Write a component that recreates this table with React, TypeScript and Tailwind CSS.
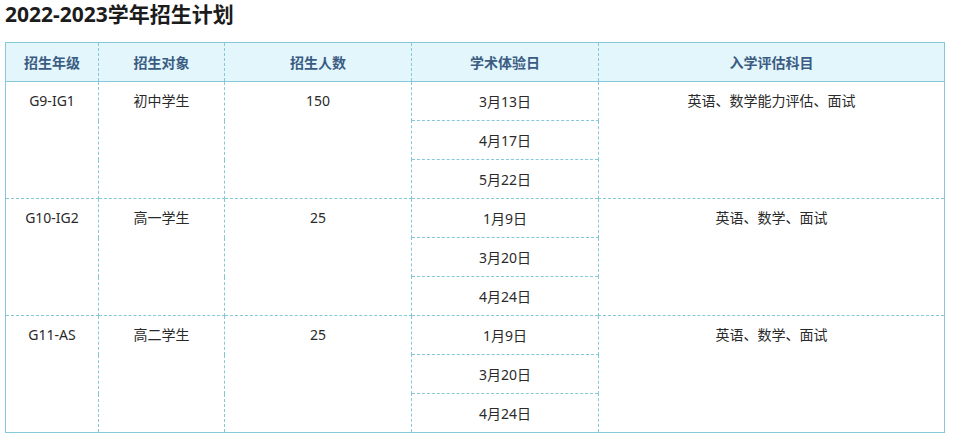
const groups = [
  {
    grade: "G9-IG1",
    target: "初中学生",
    count: "150",
    dates: ["3月13日", "4月17日", "5月22日"],
    subjects: "英语、数学能力评估、面试",
  },
  {
    grade: "G10-IG2",
    target: "高一学生",
    count: "25",
    dates: ["1月9日", "3月20日", "4月24日"],
    subjects: "英语、数学、面试",
  },
  {
    grade: "G11-AS",
    target: "高二学生",
    count: "25",
    dates: ["1月9日", "3月20日", "4月24日"],
    subjects: "英语、数学、面试",
  },
]

const headers = ["招生年级", "招生对象", "招生人数", "学术体验日", "入学评估科目"]

export default function App() {
  return (
    <div
      className="w-[955px] h-[439px] bg-white overflow-hidden"
      style={{ fontFamily: '"Noto Sans", "Noto Sans CJK SC", sans-serif' }}
    >
      <h2 className="pl-[5px] pt-[1px] text-[21px] leading-[26px] font-bold text-[#1c1c1c]">
        2022-2023学年招生计划
      </h2>
      <table className="ml-[5px] mt-[15px] w-[940px] table-fixed border-collapse border border-solid border-[#86c8d8] text-[14px] text-[#2a2a2a]">
        <colgroup>
          <col className="w-[93px]" />
          <col className="w-[126px]" />
          <col className="w-[187px]" />
          <col className="w-[187px]" />
          <col />
        </colgroup>
        <thead>
          <tr className="h-[39px] bg-[#e2f6fc]">
            {headers.map((h) => (
              <th
                key={h}
                className="border-x border-dashed border-[#86c8d8] border-b text-center align-middle font-semibold text-[#3b5c82]"
                style={{ borderBottomStyle: "solid" }}
              >
                {h}
              </th>
            ))}
          </tr>
        </thead>
        <tbody>
          {groups.map((g, gi) =>
            g.dates.map((d, di) => (
              <tr key={`${gi}-${di}`} className="h-[39px]">
                {di === 0 && (
                  <>
                    <td rowSpan={3} className="border border-dashed border-[#86c8d8] text-center align-top pt-[8px]">
                      {g.grade}
                    </td>
                    <td rowSpan={3} className="border border-dashed border-[#86c8d8] text-center align-top pt-[8px]">
                      {g.target}
                    </td>
                    <td rowSpan={3} className="border border-dashed border-[#86c8d8] text-center align-top pt-[8px]">
                      {g.count}
                    </td>
                  </>
                )}
                <td className="border border-dashed border-[#86c8d8] text-center align-middle">{d}</td>
                {di === 0 && (
                  <td rowSpan={3} className="border border-dashed border-[#86c8d8] text-center align-top pt-[8px]">
                    {g.subjects}
                  </td>
                )}
              </tr>
            ))
          )}
        </tbody>
      </table>
    </div>
  )
}
